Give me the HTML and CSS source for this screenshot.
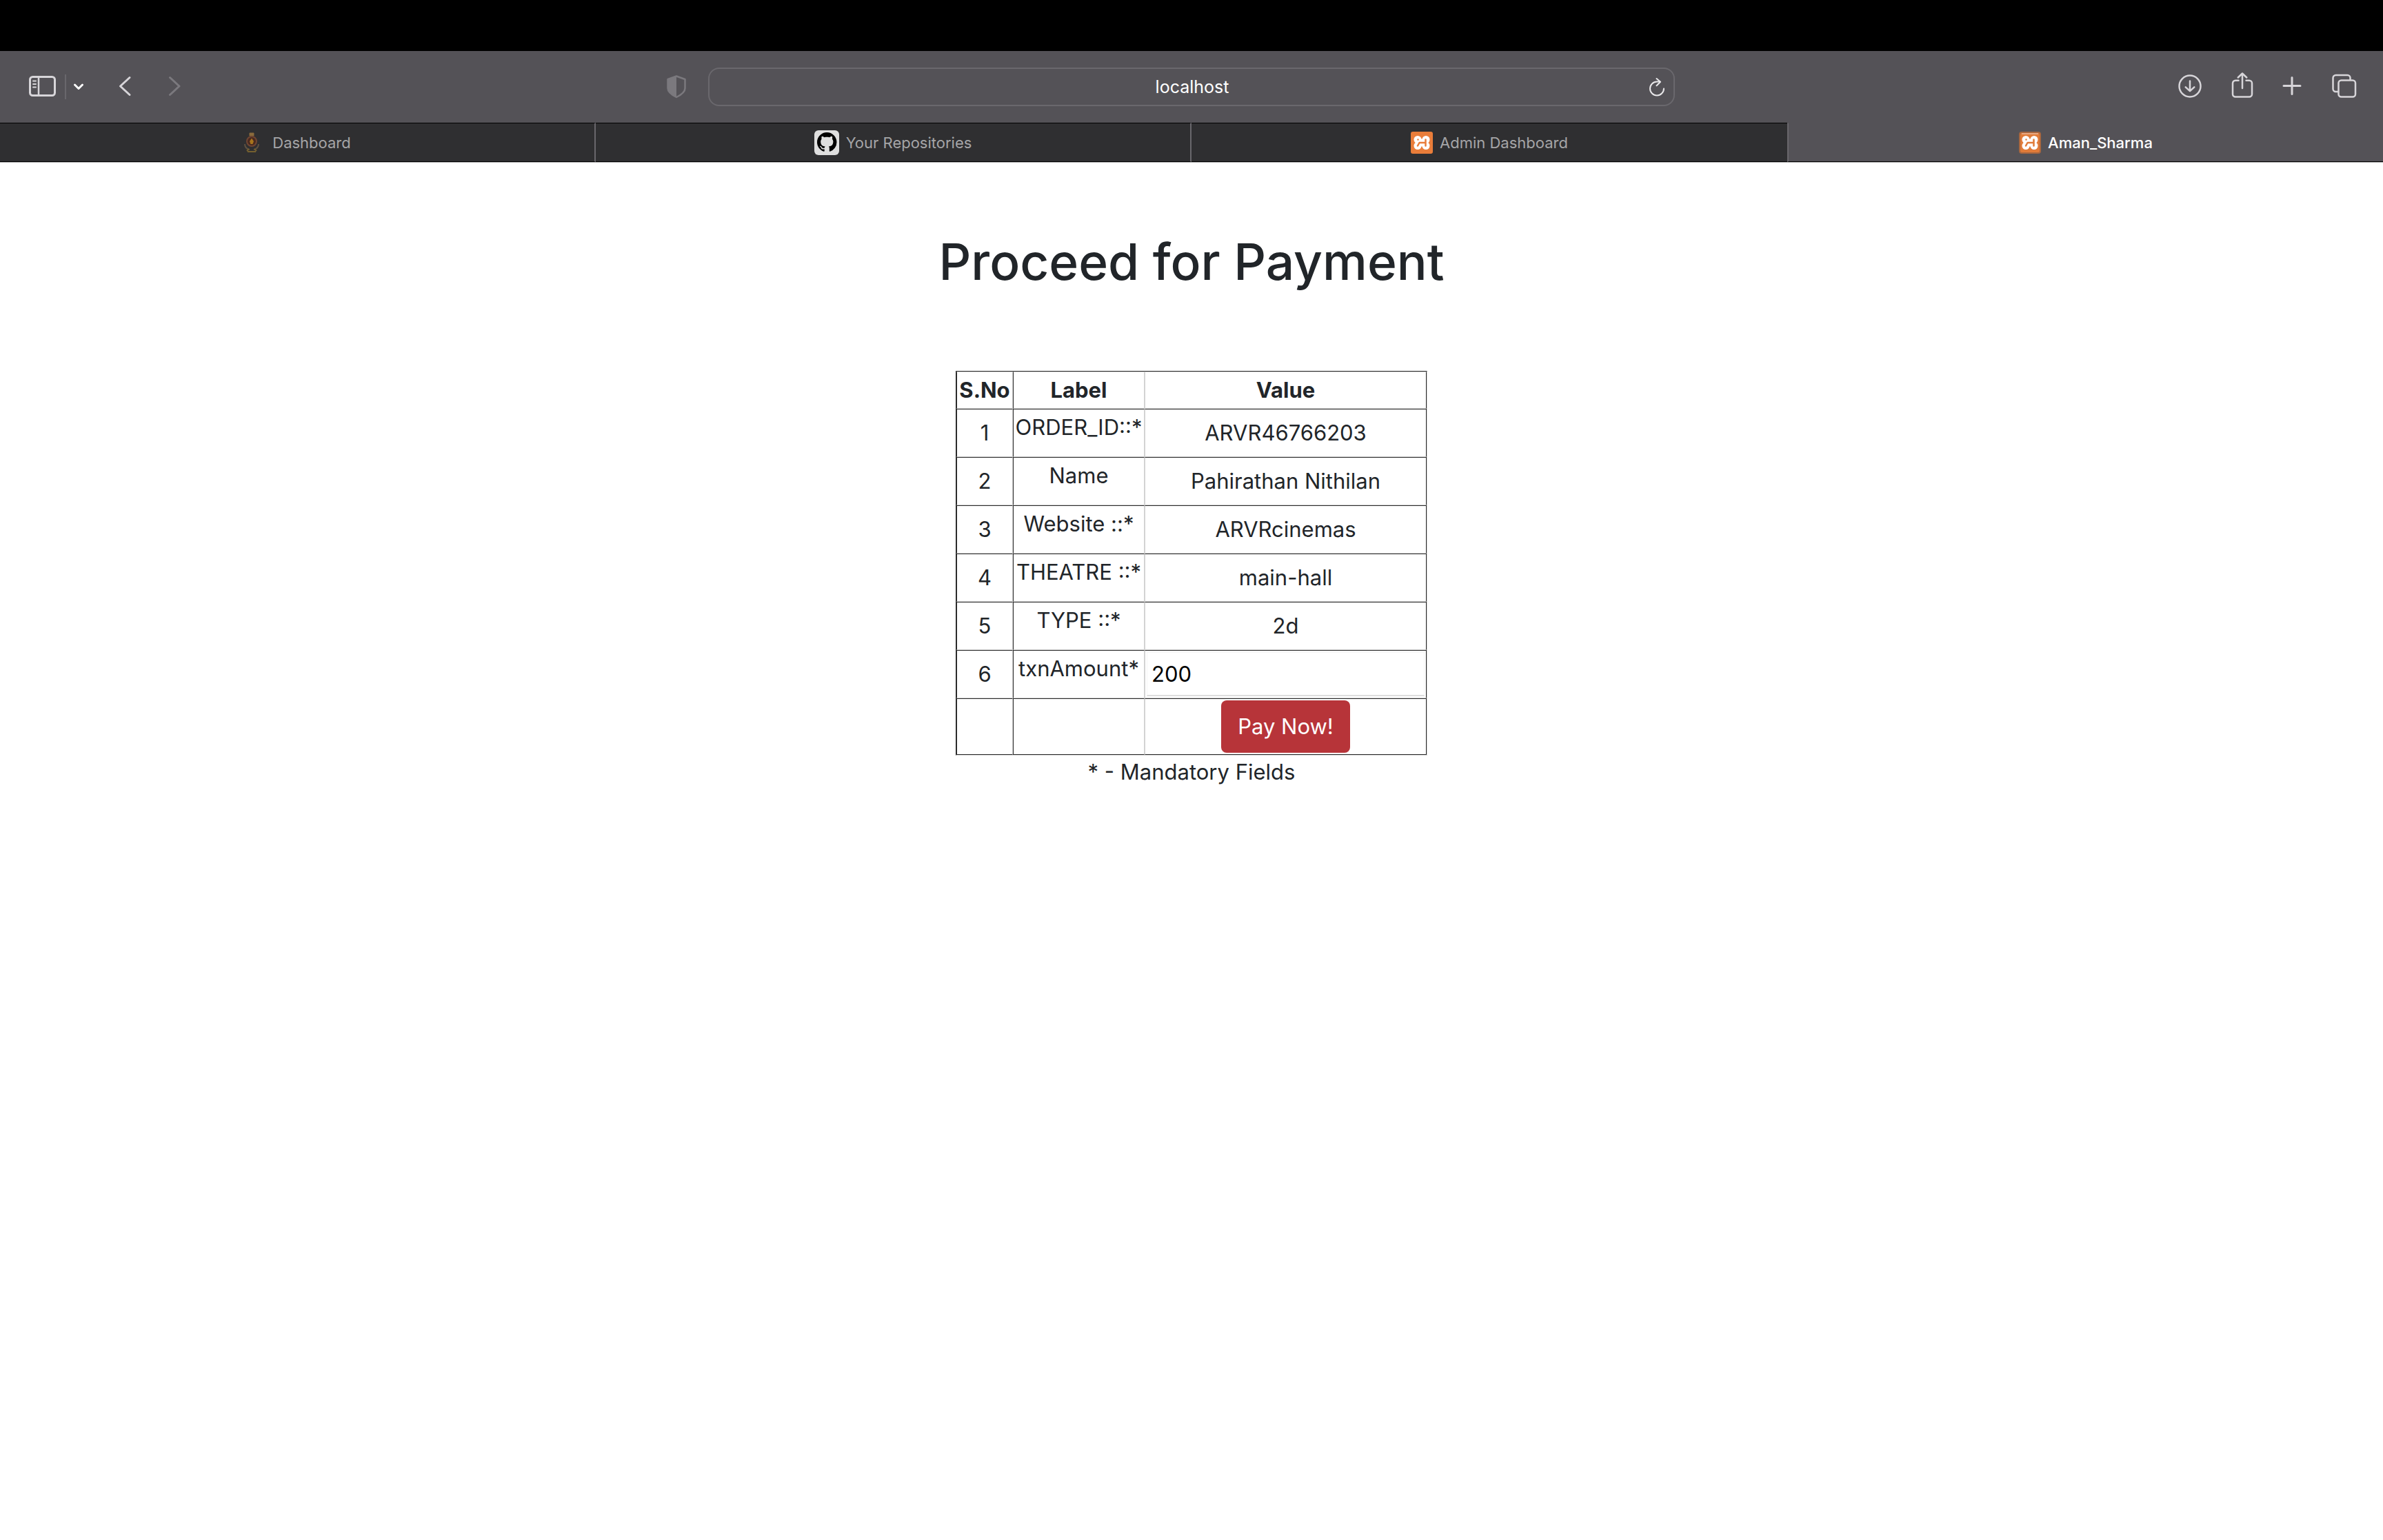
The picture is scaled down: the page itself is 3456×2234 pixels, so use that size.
FILE: index.html
```html
<!DOCTYPE html>
<html lang="en">
<head>
<meta charset="utf-8">
<title>Aman_Sharma</title>
<link rel="stylesheet" href="styles.css">
</head>
<body>
<div class="menu-strip"></div>
<header class="toolbar">
  <div class="toolbar-left">
    <button class="icon-btn" aria-label="Sidebar"><svg width="40" height="44" fill="none" stroke="currentColor"><rect x="1.500" y="7.500" width="36" height="27" rx="4" stroke-width="3"/><path d="M14 8v26" stroke-width="2.500"/><path d="M6 13.500h4M6 18h4M6 22.500h4" stroke-width="2" stroke-linecap="round"/></svg></button>
    <span class="divider"></span>
    <button class="icon-btn bright" aria-label="Tab groups"><svg width="16" height="44" fill="none" stroke="currentColor" stroke-width="3" stroke-linecap="round" stroke-linejoin="round"><path d="M2.500 19l5.500 5.500 5.500-5.500"/></svg></button>
    <button class="icon-btn back" aria-label="Back"><svg width="20" height="44" fill="none" stroke="currentColor" stroke-width="3" stroke-linecap="round" stroke-linejoin="round"><path d="M16 8.500L2.500 21 16 33.500"/></svg></button>
    <button class="icon-btn dim forward" aria-label="Forward"><svg width="20" height="44" fill="none" stroke="currentColor" stroke-width="3" stroke-linecap="round" stroke-linejoin="round"><path d="M2.500 8.500L16 21 2.500 33.500"/></svg></button>
    <button class="icon-btn dim shield" aria-label="Privacy report"><svg width="28" height="44"><path d="M14 6.500L26.500 11v13c0 5-4.500 9-12.500 13C6 33 1.500 29 1.500 24V11z" fill="none" stroke="currentColor" stroke-width="2.500" stroke-linejoin="round"/><path d="M14 6.500V37C6 33 1.500 29 1.500 24V11z" fill="currentColor"/></svg></button>
  </div>
  <div class="address">
    <input class="address-input" type="text" value="localhost" aria-label="Address">
    <button class="icon-btn reload" aria-label="Reload"><svg width="24" height="28" fill="none" stroke="currentColor" stroke-width="2" stroke-linecap="round" stroke-linejoin="round"><path d="M22 16.500A10 10 0 1 1 12 6.500h4.500"/><path d="M11.500 2l5.500 4.800-5.500 5.500"/></svg></button>
  </div>
  <div class="toolbar-right">
    <button class="icon-btn" aria-label="Downloads"><svg width="36" height="44" fill="none" stroke="currentColor" stroke-width="2.500" stroke-linecap="round" stroke-linejoin="round"><circle cx="18" cy="21" r="15.500"/><path d="M18 13.500v14.500M11.700 22.300L18 28.200l6.300-5.900"/></svg></button>
    <button class="icon-btn" aria-label="Share"><svg width="32" height="44" fill="none" stroke="currentColor" stroke-width="2.500" stroke-linecap="round" stroke-linejoin="round"><path d="M10.500 12.800H6a4 4 0 0 0-4 4V32.500a4 4 0 0 0 4 4h20a4 4 0 0 0 4-4V16.800a4 4 0 0 0-4-4h-4.500"/><path d="M16 24V3M9.700 8.500L16 2.500l6.300 6"/></svg></button>
    <button class="icon-btn" aria-label="New tab"><svg width="30" height="44" fill="none" stroke="currentColor" stroke-width="3" stroke-linecap="round"><path d="M14 8.500v24M2 20.500h24"/></svg></button>
    <button class="icon-btn" aria-label="Tab overview"><svg width="36" height="44" fill="none" stroke="currentColor" stroke-width="2.500" stroke-linejoin="round"><rect x="9.500" y="12.500" width="24.500" height="24" rx="4"/><path d="M26.500 12V9a4 4 0 0 0-4-4H5.500a4 4 0 0 0-4 4v16a4 4 0 0 0 4 4h4"/></svg></button>
  </div>
</header>
<nav class="tabs">
  <a class="tab" href="#"><svg class="favicon-crest" width="24" height="32"><g fill="none" stroke-width="2"><path d="M9 2h6v4H9z" fill="#8a6b3c" stroke="#8a6b3c" stroke-width="1"/><circle cx="12" cy="14" r="7" fill="#4a2a20" stroke="#704633"/><path d="M12 9.500l3 4.500-1.500 4h-3L9 14z" fill="#a8741c"/><path d="M2 18c0 4 3 7 7 8M22 18c0 4-3 7-7 8" stroke="#5f5140"/><path d="M5 28l3-3M19 28l-3-3M6 29h12" stroke="#75602f"/></g></svg><span>Dashboard</span></a>
  <a class="tab" href="#"><svg width="36" height="36"><rect width="36" height="36" rx="6" fill="#dfdfdf"/><path transform="translate(4 3) scale(1.780)" fill="#000" d="M8 0C3.580 0 0 3.580 0 8c0 3.540 2.290 6.530 5.470 7.590.4.070.55-.17.55-.38 0-.19-.01-.82-.01-1.490-2.010.37-2.530-.49-2.690-.94-.09-.23-.48-.94-.82-1.130-.28-.15-.68-.52-.01-.53.63-.01 1.080.58 1.230.82.72 1.210 1.870.87 2.330.66.07-.52.28-.87.51-1.070-1.780-.2-3.640-.89-3.640-3.950 0-.87.31-1.590.82-2.150-.08-.2-.36-1.020.08-2.120 0 0 .67-.21 2.200.82.64-.18 1.320-.27 2-.27s1.360.09 2 .27c1.530-1.040 2.200-.82 2.200-.82.44 1.100.16 1.920.08 2.120.51.56.82 1.270.82 2.150 0 3.070-1.870 3.750-3.650 3.950.29.25.54.73.54 1.480 0 1.070-.01 1.930-.01 2.200 0 .21.15.46.55.38A8.010 8.010 0 0 0 16 8c0-4.420-3.580-8-8-8z"/></svg><span>Your Repositories</span></a>
  <a class="tab" href="#"><svg width="32" height="32"><rect width="32" height="32" rx="3" fill="#e97d3a"/><g fill="#fff"><circle cx="10" cy="11.500" r="5.500"/><circle cx="22" cy="11.500" r="5.500"/><circle cx="10" cy="20.500" r="5.500"/><circle cx="22" cy="20.500" r="5.500"/><path d="M10 10.500h12v11H10z"/></g><path d="M10.500 11.500v.1M10 20.500l2.500-4.500H21M21.500 11.500v9" fill="none" stroke="#e97d3a" stroke-width="2.500" stroke-linecap="round" stroke-linejoin="round"/></svg><span>Admin Dashboard</span></a>
  <a class="tab active" href="#" aria-current="page"><svg width="32" height="32"><rect x="1" y="1" width="30" height="30" rx="3" fill="#e07b39" stroke="#a9673f" stroke-width="2"/><path d="M4 3h24" stroke="#e9a881" stroke-width="2"/><g fill="#fff"><circle cx="10" cy="11.500" r="5.500"/><circle cx="22" cy="11.500" r="5.500"/><circle cx="10" cy="20.500" r="5.500"/><circle cx="22" cy="20.500" r="5.500"/><path d="M10 10.500h12v11H10z"/></g><path d="M10.500 11.500v.1M10 20.500l2.500-4.500H21M21.500 11.500v9" fill="none" stroke="#e07b39" stroke-width="2.500" stroke-linecap="round" stroke-linejoin="round"/></svg><span>Aman_Sharma</span></a>
</nav>
<main class="page">
  <h1 class="title">Proceed for Payment</h1>
  <form class="payment">
    <table class="details">
      <thead>
        <tr><th class="num">S.No</th><th class="name">Label</th><th class="value">Value</th></tr>
      </thead>
      <tbody>
        <tr><td>1</td><td><span class="label">ORDER_ID::*</span></td><td>ARVR46766203</td></tr>
        <tr><td>2</td><td><span class="label">Name</span></td><td>Pahirathan Nithilan</td></tr>
        <tr><td>3</td><td><span class="label">Website ::*</span></td><td>ARVRcinemas</td></tr>
        <tr><td>4</td><td><span class="label">THEATRE ::*</span></td><td>main-hall</td></tr>
        <tr><td>5</td><td><span class="label">TYPE ::*</span></td><td>2d</td></tr>
        <tr><td>6</td><td><label class="label" for="amount">txnAmount*</label></td><td><input class="amount" id="amount" type="text" value="200"></td></tr>
        <tr><td></td><td></td><td><button class="pay" type="button">Pay Now!</button></td></tr>
      </tbody>
    </table>
    <p class="note">* - Mandatory Fields</p>
  </form>
</main>
</body>
</html>
```
FILE: styles.css
```css
* { box-sizing: border-box; }

body {
  margin: 0;
  background: #fff;
  color: #212529;
  font-family: Inter, "Liberation Sans", sans-serif;
  font-size: 31px;
  line-height: 48px;
}

button, input { font: inherit; }

/* Browser chrome */
.menu-strip { height: 74px; background: #000; }

.toolbar {
  display: grid;
  grid-template-columns: 1fr minmax(0, 1402px) 1fr;
  align-items: center;
  height: 104px;
  background: #545257;
}

.toolbar-left, .toolbar-right { display: flex; align-items: center; }
.toolbar-left { padding: 0 32px 0 42px; }
.toolbar-right { justify-content: flex-end; gap: 42px; padding-right: 38px; }

.icon-btn {
  display: flex;
  padding: 0;
  border: 0;
  background: none;
  color: #d7d5d9;
}
.icon-btn.bright { color: #fff; }
.icon-btn.dim { color: #7b797e; }
.divider { width: 2px; height: 36px; margin: 0 10px 0 12px; background: #69676c; }
.back { margin-left: 50px; }
.forward { margin-left: 52px; }
.shield { margin-left: auto; }

.address {
  display: flex;
  align-items: center;
  height: 56px;
  padding: 0 12px 0 38px;
  border: 2px solid #6a686d;
  border-radius: 16px;
}
.address-input {
  flex: 1;
  min-width: 0;
  padding: 0;
  border: 0;
  background: none;
  color: #fff;
  font-size: 25px;
  line-height: 32px;
  text-align: center;
}
.reload { color: #e8e7e9; }

.tabs {
  display: grid;
  grid-template-columns: repeat(4, 1fr);
  height: 58px;
  border-bottom: 1px solid #b5b5b5;
}
.tab {
  display: flex;
  align-items: center;
  justify-content: center;
  gap: 10px;
  border-top: 1px solid #000;
  border-bottom: 1px solid #000;
  border-right: 2px solid #69676c;
  background: #2f2f31;
  color: #a5a5a7;
  font-size: 22px;
  line-height: 28px;
  text-decoration: none;
}
.tab:nth-child(3) { border-right: 0; }
.tab.active {
  border-top-color: #545257;
  border-right: 0;
  border-left: 2px solid #69676c;
  background: #545257;
  color: #fff;
  font-weight: 500;
}
.favicon-crest { margin-right: 8px; }

/* Payment page */
.page { padding-top: 96px; text-align: center; }

.title {
  margin: 0 0 110px;
  font-size: 73px;
  font-weight: 500;
  line-height: 96px;
}

.details {
  margin: 0 auto;
  border: 1px solid #2b2b2b;
  border-right-color: #d3d3d3;
  border-bottom-color: #d3d3d3;
  border-spacing: 0;
}
.details th, .details td {
  padding: 2px;
  border: 1px solid #d3d3d3;
}
.details th { padding: 2px 0; }
.details td { border-top-color: #2b2b2b; }
.details tr > :nth-child(1), .details tr > :nth-child(2) { border-left-color: #2b2b2b; }
.details tr > :nth-child(3) { border-right-color: #2b2b2b; }
.details tr:last-child > td { border-bottom-color: #2b2b2b; }
.details thead th { border-bottom-color: #d3d3d3; }
.num { width: 82px; }
.name { width: 191px; }
.value { width: 409px; }

.label { display: block; margin-bottom: 16px; white-space: nowrap; }

.amount {
  display: block;
  width: 100%;
  height: 64px;
  padding: 0 6px;
  border: 1px solid #f6f6f6;
  border-bottom: 2px solid #dedede;
  background: #fff;
  color: #000;
}

.pay {
  display: block;
  height: 76px;
  margin: 0 auto;
  padding: 0 24px;
  border: 0;
  border-radius: 8px;
  background: #b73439;
  color: #fff;
}

.note { margin: 0; }
```
